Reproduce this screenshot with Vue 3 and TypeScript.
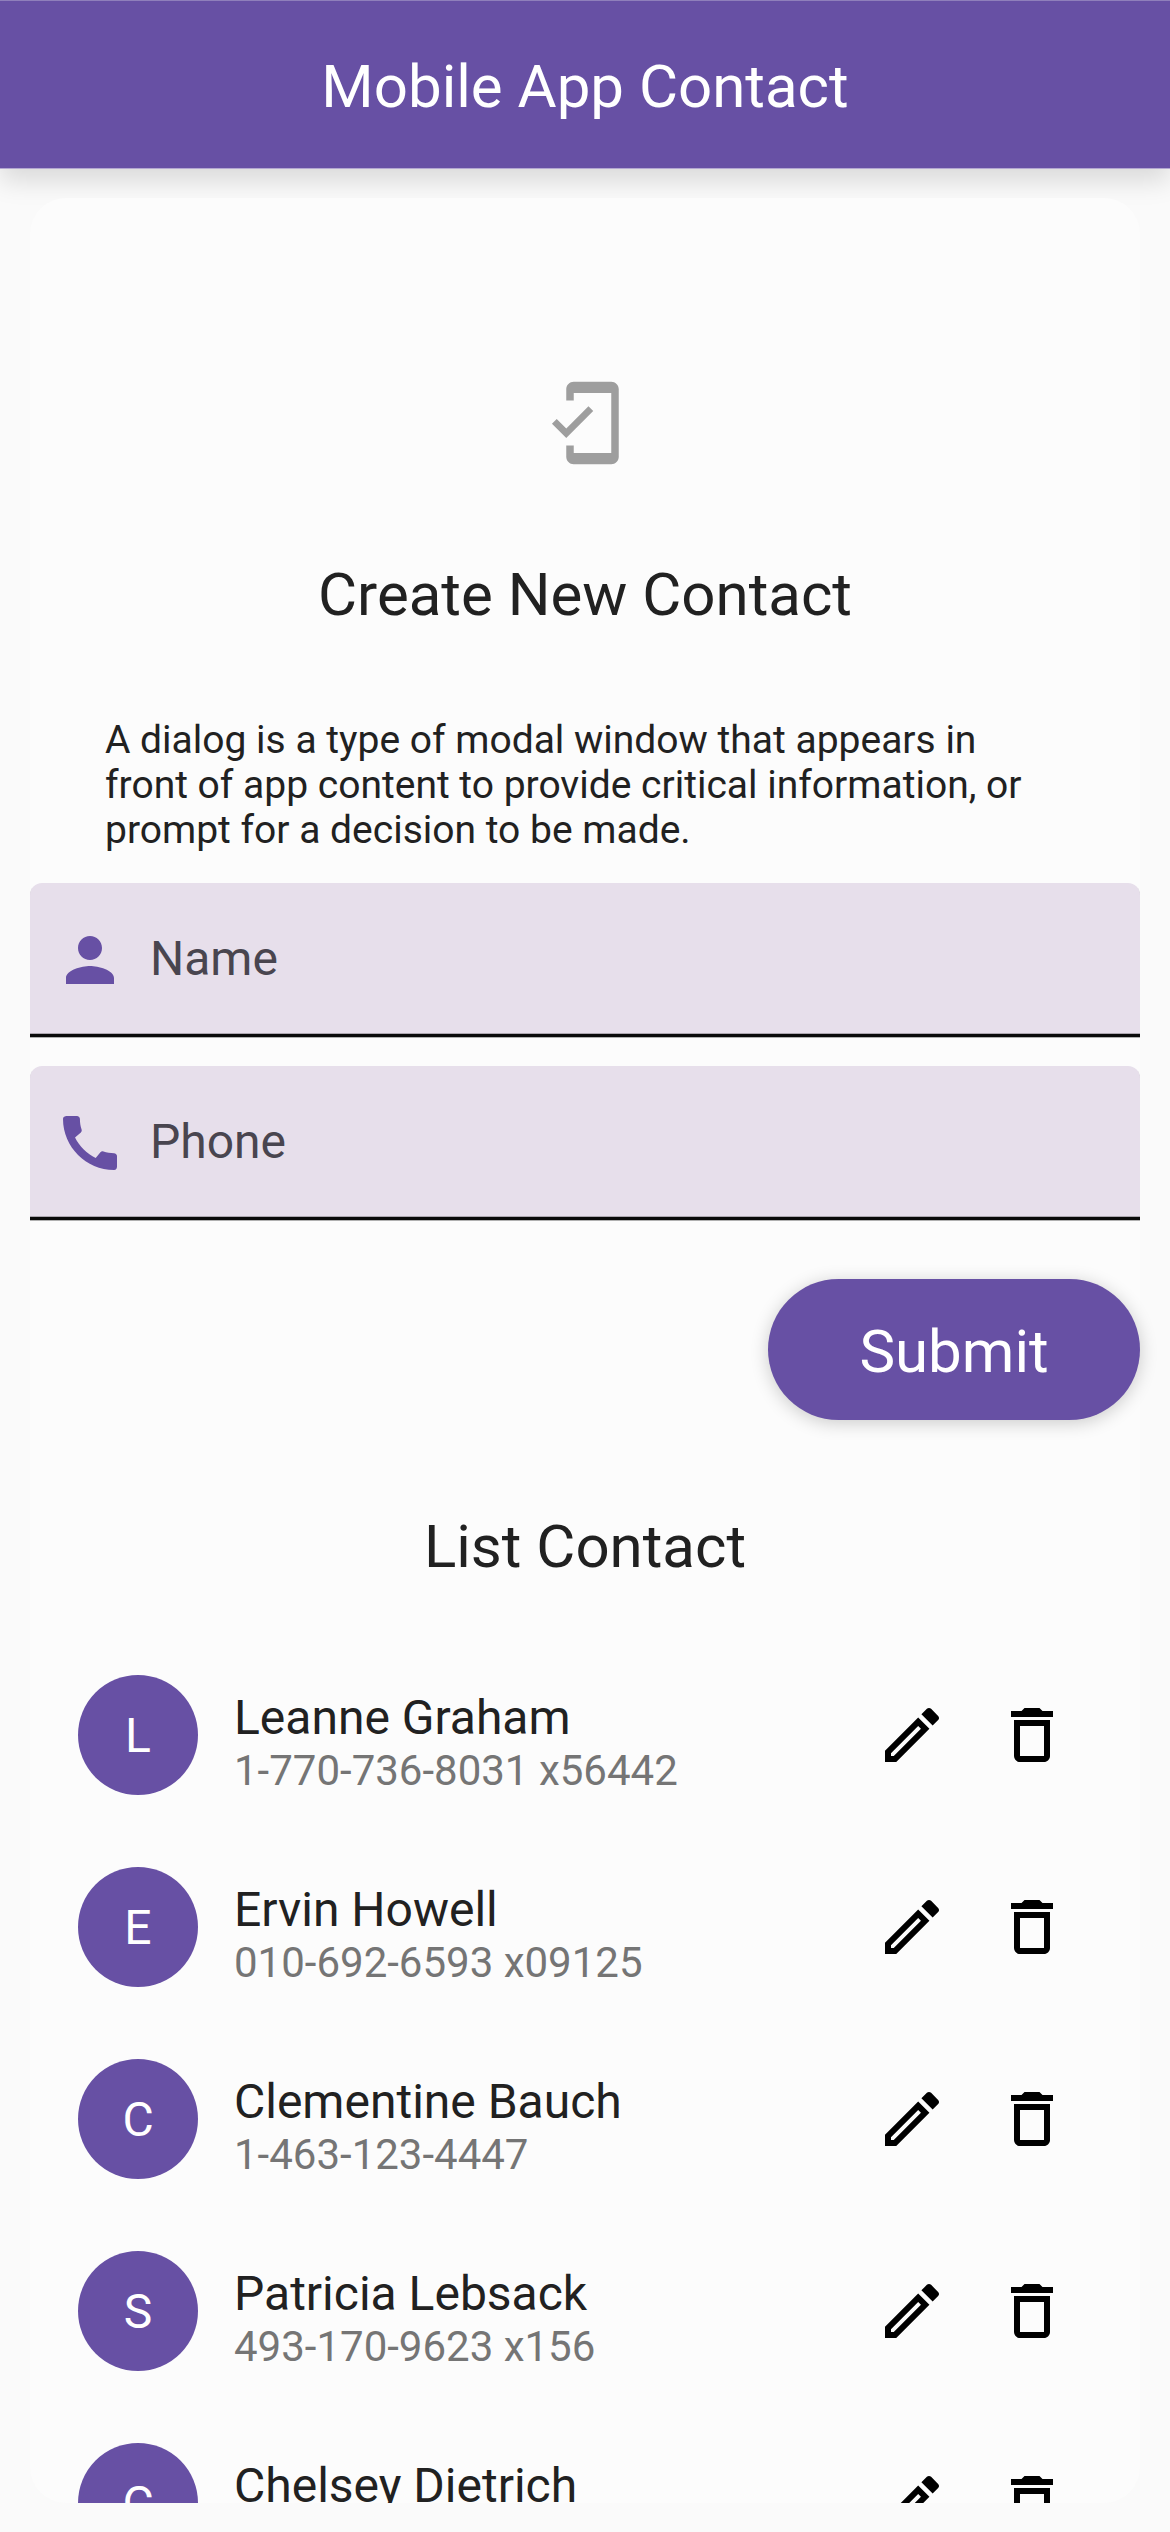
<script setup lang="ts">
interface Contact {
  initial: string
  name: string
  phone: string
}

const contacts: Contact[] = [
  { initial: 'L', name: 'Leanne Graham', phone: '1-770-736-8031 x56442' },
  { initial: 'E', name: 'Ervin Howell', phone: '010-692-6593 x09125' },
  { initial: 'C', name: 'Clementine Bauch', phone: '1-463-123-4447' },
  { initial: 'S', name: 'Patricia Lebsack', phone: '493-170-9623 x156' },
  { initial: 'C', name: 'Chelsey Dietrich', phone: '' },
]
</script>

<template>
  <div class="screen">
    <header class="app-bar">
      <h1 class="title">Mobile App Contact</h1>
    </header>

    <main class="card">
      <svg class="hero-icon" viewBox="0 0 24 24">
        <path
          d="M19 1H9c-1.1 0-2 .9-2 2v3h2V4h10v16H9v-2H7v3c0 1.1.9 2 2 2h10c1.1 0 2-.9 2-2V3c0-1.1-.9-2-2-2zM7.01 13.47l-2.55-2.55-1.27 1.27L7 16l7.19-7.19-1.27-1.27z"
        />
      </svg>
      <h2 class="heading create">Create New Contact</h2>
      <p class="intro">
        A dialog is a type of modal window that appears in<br />front of app content to provide
        critical information, or<br />prompt for a decision to be made.
      </p>

      <div class="field">
        <svg class="field-icon" viewBox="0 0 24 24">
          <path
            d="M12 12c2.21 0 4-1.79 4-4s-1.79-4-4-4-4 1.79-4 4 1.79 4 4 4zm0 2c-2.67 0-8 1.34-8 4v2h16v-2c0-2.66-5.33-4-8-4z"
          />
        </svg>
        <span class="label">Name</span>
      </div>
      <div class="field">
        <svg class="field-icon" viewBox="0 0 24 24">
          <path
            d="M20.01 15.38c-1.23 0-2.42-.2-3.53-.56-.35-.12-.74-.03-1.01.24l-1.57 1.97c-2.83-1.35-5.48-3.9-6.89-6.83l1.95-1.66c.27-.28.35-.67.24-1.02-.37-1.11-.56-2.3-.56-3.53 0-.54-.45-.99-.99-.99H4.19C3.65 3 3 3.24 3 3.99 3 13.28 10.73 21 20.01 21c.71 0 .99-.63.99-1.18v-3.45c0-.54-.45-.99-.99-.99z"
          />
        </svg>
        <span class="label">Phone</span>
      </div>

      <button class="submit" type="button">Submit</button>

      <h2 class="heading list-title">List Contact</h2>

      <ul class="contacts">
        <li v-for="contact in contacts" :key="contact.name" class="contact">
          <span class="avatar">{{ contact.initial }}</span>
          <div class="info">
            <span class="name">{{ contact.name }}</span>
            <span class="phone">{{ contact.phone }}</span>
          </div>
          <svg class="action" viewBox="0 0 24 24">
            <path
              d="M14.06 9.02l.92.92L5.92 19H5v-.92l9.06-9.06M17.66 3c-.25 0-.51.1-.7.29l-1.83 1.83 3.75 3.75 1.83-1.83c.39-.39.39-1.02 0-1.41l-2.34-2.34c-.2-.2-.45-.29-.71-.29zm-3.6 3.19L3 17.25V21h3.75L17.81 9.94l-3.75-3.75z"
            />
          </svg>
          <svg class="action" viewBox="0 0 24 24">
            <path
              d="M6 19c0 1.1.9 2 2 2h8c1.1 0 2-.9 2-2V7H6v12zM8 9h8v10H8V9zm7.5-5l-1-1h-5l-1 1H5v2h14V4z"
            />
          </svg>
        </li>
      </ul>
    </main>
  </div>
</template>

<style>
body {
  background: #fafafa;
}
</style>

<style scoped>
.screen {
  display: flex;
  flex-direction: column;
  box-sizing: border-box;
  width: 1170px;
  height: 2532px;
  padding-bottom: 29px;
  overflow: hidden;
  background: #fafafa;
  color: #212121;
  font-family: Roboto, sans-serif;
}

.app-bar {
  display: flex;
  flex: none;
  align-items: center;
  justify-content: center;
  box-sizing: border-box;
  height: 169px;
  padding-top: 5px;
  border-top: 1px solid #8f7fbb;
  border-bottom: 1px solid #b3a7d1;
  background: #6750a4;
  box-shadow: 0 12px 24px rgba(0, 0, 0, 0.13);
}

.title,
.heading {
  margin: 0;
  font-size: 60px;
  font-weight: 400;
  line-height: 72px;
}

.title {
  color: #fff;
}

.card {
  display: flex;
  flex: 1;
  flex-direction: column;
  min-height: 0;
  margin: 29px 30px 0;
  overflow-x: visible;
  overflow-y: clip;
  border-radius: 36px;
  background: #fcfcfc;
}

.card > * {
  flex: none;
}

.hero-icon {
  width: 90px;
  height: 90px;
  margin: 180px auto 0;
  fill: #9e9e9e;
}

.heading {
  text-align: center;
}

.create {
  margin-top: 91px;
}

.intro {
  margin: 87px 75px 0;
  font-size: 39px;
  line-height: 45px;
  white-space: nowrap;
}

.field {
  display: flex;
  align-items: center;
  box-sizing: border-box;
  height: 154px;
  margin-top: 29px;
  padding: 2px 0 0 24px;
  border-bottom: 3px solid #0a0a0a;
  border-radius: 12px 12px 0 0;
  background: #e7dfeb;
  box-shadow:
    0 1px 0 rgba(0, 0, 0, 0.3),
    inset 0 -1px 0 rgba(0, 0, 0, 0.25);
}

.intro + .field {
  margin-top: 30px;
}

.field-icon {
  width: 72px;
  height: 72px;
  fill: #6750a4;
}

.label {
  margin: 0 0 3px 24px;
  color: #49454f;
  font-size: 48px;
}

.submit {
  align-self: flex-end;
  width: 372px;
  height: 141px;
  margin: 58.5px 0 0;
  padding: 4px 0 0;
  border: 0;
  border-radius: 71px;
  background: #6750a4;
  box-shadow: 0 3px 18px rgba(0, 0, 0, 0.2);
  color: #fff;
  font-family: inherit;
  font-size: 60px;
}

.list-title {
  margin-top: 91px;
}

.contacts {
  margin: 56px 0 0;
  padding: 0 72px 0 48px;
  list-style: none;
}

.contact {
  display: flex;
  align-items: center;
  height: 192px;
}

.avatar {
  box-sizing: border-box;
  width: 120px;
  height: 120px;
  padding-top: 1px;
  border-radius: 50%;
  background: #6750a4;
  color: #fff;
  font-size: 48px;
  line-height: 120px;
  text-align: center;
}

.info {
  display: flex;
  flex: 1;
  flex-direction: column;
  margin-left: 36px;
  padding-top: 16px;
}

.name {
  font-size: 48px;
  line-height: 56px;
}

.phone {
  height: 49px;
  color: #757575;
  font-size: 42px;
  line-height: 49px;
}

.action {
  width: 72px;
  height: 72px;
  margin-left: 48px;
}
</style>
